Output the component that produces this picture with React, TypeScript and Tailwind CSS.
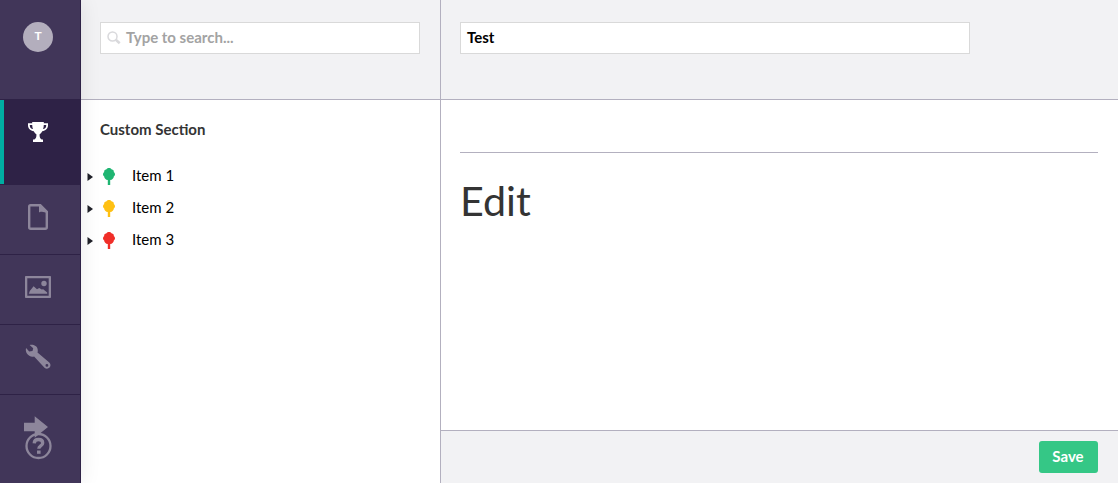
import type { ReactNode } from "react";

function Trophy() {
  return (
    <svg width="22" height="22" viewBox="0 0 22 22" fill="currentColor">
      <path d="M5.200 1h11.600v1.300H21v2.200c0 3-2.400 5.100-5.800 5.700-.7 1.500-1.500 2.400-2.600 3v1.500c.1 1.700.7 2.900 2 3.800h1.400V21H6v-2.500h1.400c1.300-.9 1.900-2.100 2-3.800v-1.500c-1.100-.6-1.900-1.500-2.600-3C3.400 9.600 1 7.500 1 4.500V2.300h4.200V1zM2.800 3.900v.8c0 1.700 1.200 2.900 3.200 3.400-.5-1.300-.8-2.700-.8-4.200H2.800zm16.400 0h-2.400c0 1.500-.3 2.900-.8 4.200 2-.5 3.200-1.700 3.200-3.400v-.8z" fillRule="evenodd" />
    </svg>
  );
}

function Page() {
  return (
    <svg width="20" height="26" viewBox="0 0 20 26" fill="none">
      <path d="M2.500 1.200h9.800l6.500 6.600v15.400c0 .9-.6 1.500-1.500 1.500H2.700c-.9 0-1.500-.6-1.500-1.500V2.600c0-.9.5-1.400 1.300-1.400z" stroke="currentColor" strokeWidth="2.400" />
      <path d="M11 1v7.500c1-1.200 2.500-.7 4.200-.5 1.700.1 3.100.6 4.300 1.600V7.500L13 1h-2z" fill="currentColor" />
    </svg>
  );
}

function Picture() {
  return (
    <svg width="26" height="22" viewBox="0 0 26 22" fill="currentColor">
      <path fillRule="evenodd" d="M.8 0h24.400c.5 0 .8.300.8.800v20.400c0 .5-.3.800-.8.800H.8c-.5 0-.8-.3-.8-.8V.8C0 .3.300 0 .8 0zM2.300 2.300v17.400h21.400V2.300H2.300z" />
      <circle cx="19" cy="7.500" r="2.700" />
      <path d="M3.800 17.800 4.800 15l3.800-4.700 3.400 3 2.200-1.200 2.600 1.500 1.400-.3 4 3.200v1.300z" />
    </svg>
  );
}

function Wrench() {
  return (
    <svg width="26" height="26" viewBox="0 0 26 26" fill="currentColor">
      <path fillRule="evenodd" d="M4.600 1c3.600-.8 7.500.8 8.100 4.400.2 1.100.1 2.200-.2 3.100l11.800 10.100c1.500 1.400 1.600 3.500.3 5-1.400 1.500-3.600 1.500-5.100.2L9.100 12.500c-2.800.7-5.600-.4-7.200-2.900C.9 8 .5 5.700 1.100 4.100l3.100 3.300 3.300-.5.700-2.700L4.600 1zM21.900 20a1.400 1.400 0 1 0 0 2.800 1.400 1.400 0 0 0 0-2.800z" />
    </svg>
  );
}

function Arrow() {
  return (
    <svg width="24" height="22" viewBox="0 0 24 22" fill="currentColor">
      <path d="M0 6.800h10.700V.3L24 11 10.700 21.700v-6.500H0z" />
    </svg>
  );
}

function Help() {
  return (
    <svg width="28" height="28" viewBox="0 0 28 28" fill="none" stroke="currentColor">
      <circle cx="14.500" cy="14" r="12" strokeWidth="2.300" />
      <path d="M10.200 11.400c.1-2.600 1.800-3.900 4.300-3.900s4.200 1.300 4.200 3.400c0 3.300-3.900 2.800-3.900 5.800" strokeWidth="3.300" />
      <path d="M14.800 18.500v3.300" strokeWidth="3.600" />
    </svg>
  );
}

function NavItem({ children }: { children: ReactNode }) {
  return (
    <div className="h-[70px] shrink-0 border-b border-[#2e2246] text-[#8d869b]">{children}</div>
  );
}

const items = [
  { label: "Item 1", color: "text-[#1fb572]" },
  { label: "Item 2", color: "text-[#fec013]" },
  { label: "Item 3", color: "text-[#f02e28]" },
];

function Tree() {
  return (
    <svg width="12" height="18" viewBox="0 0 12 18" fill="currentColor">
      <path d="M6 0c1.500 0 2.300.7 2.800 1.500 1.500.2 2.200 1.200 2 2.400C11.600 4.500 12 5.300 12 6.200c0 1-.5 1.700-1.200 2.200 0 1.800-1.500 3.200-3.600 3.700V17H4.800v-4.900C2.700 11.600 1.200 10.200 1.200 8.400.500 7.900 0 7.200 0 6.200c0-.9.400-1.700 1.200-2.300-.2-1.200.5-2.200 2-2.400C3.700.7 4.500 0 6 0z" />
    </svg>
  );
}

export default function App() {
  return (
    <div className="flex h-[483px] w-full overflow-hidden bg-white font-['Lato',sans-serif] text-[15px] leading-5 text-black">
      <aside className="relative z-10 flex w-[81px] shrink-0 flex-col border-r border-[#2e2246] bg-[#413659] shadow-[0_0_20px_rgba(0,0,0,0.09)]">
        <div className="h-[99px] shrink-0 pl-[23px] pt-[22px]">
          <div className="flex size-[30px] items-center justify-center rounded-full bg-[#b3aebd] pb-[3px] text-[12px] font-bold leading-none text-white">
            T
          </div>
        </div>
        <div className="flex h-[86px] shrink-0 border-y border-[#2e2246] bg-[#2e2246] text-white">
          <div className="w-1 bg-[#00aea2]" />
          <div className="pl-[23px] pt-[21px]"><Trophy /></div>
        </div>
        <NavItem><div className="pl-7 pt-[19px]"><Page /></div></NavItem>
        <NavItem><div className="pl-[25px] pt-[21px]"><Picture /></div></NavItem>
        <NavItem><div className="pl-[25px] pt-[19px]"><Wrench /></div></NavItem>
        <div className="flex flex-col pl-6 pt-[21px] text-[#8d869b]">
          <Arrow />
          <div className="-mt-[6px]"><Help /></div>
        </div>
      </aside>

      <section className="flex w-[360px] shrink-0 flex-col border-r border-[#b3b0bf]">
        <div className="h-[100px] border-b border-[#b3b0bf] bg-[#f2f2f4] pl-[19px] pt-[22px]">
          <div className="flex h-8 w-[320px] items-center border border-[#d9d9d9] bg-white pl-[6px]">
            <svg width="14" height="14" viewBox="0 0 14 14" fill="none" stroke="#d9d9dc">
              <circle cx="5.500" cy="5.500" r="4.500" strokeWidth="1.500" />
              <path d="m8.800 8.800 3.900 3.500" strokeWidth="2.500" />
            </svg>
            <span className="pb-[2px] pl-[5px] font-bold text-[#a3a3a3]">Type to search...</span>
          </div>
        </div>
        <h2 className="pl-[19px] pt-[19px] font-bold text-[#343434]">Custom Section</h2>
        <ul className="pt-[21px]">
          {items.map((item) => (
            <li key={item.label} className="flex h-8 items-center pl-[6px]">
              <svg width="6" height="8" viewBox="0 0 6 8" className="mt-px" fill="#202129">
                <path d="M.5 0 6 4 .5 8z" />
              </svg>
              <span className={`pl-[10px] pt-[2px] ${item.color}`}><Tree /></span>
              <span className="pb-[2px] pl-[17px]">{item.label}</span>
            </li>
          ))}
        </ul>
      </section>

      <main className="flex min-w-0 flex-1 flex-col">
        <header className="h-[100px] shrink-0 border-b border-[#b3b0bf] bg-[#f2f2f4] pl-[19px] pt-[22px]">
          <div className="flex h-8 w-[510px] items-center border border-[#d9d9d9] bg-white pb-[2px] pl-[6px] font-bold">
            Test
          </div>
        </header>
        <div className="flex-1 pl-[19px] pr-5 pt-[52px]">
          <div className="border-t border-[#b3b0bf]" />
          <h1 className="pt-[27px] text-[41.25px] leading-10 text-[#343434]">Edit</h1>
        </div>
        <footer className="flex h-[53px] shrink-0 justify-end border-t border-[#b3b0bf] bg-[#f2f2f4] pr-5 pt-[10px]">
          <button className="h-8 w-[59px] rounded-[3px] bg-[#35c786] pb-[2px] pr-px font-bold text-white">Save</button>
        </footer>
      </main>
    </div>
  );
}
